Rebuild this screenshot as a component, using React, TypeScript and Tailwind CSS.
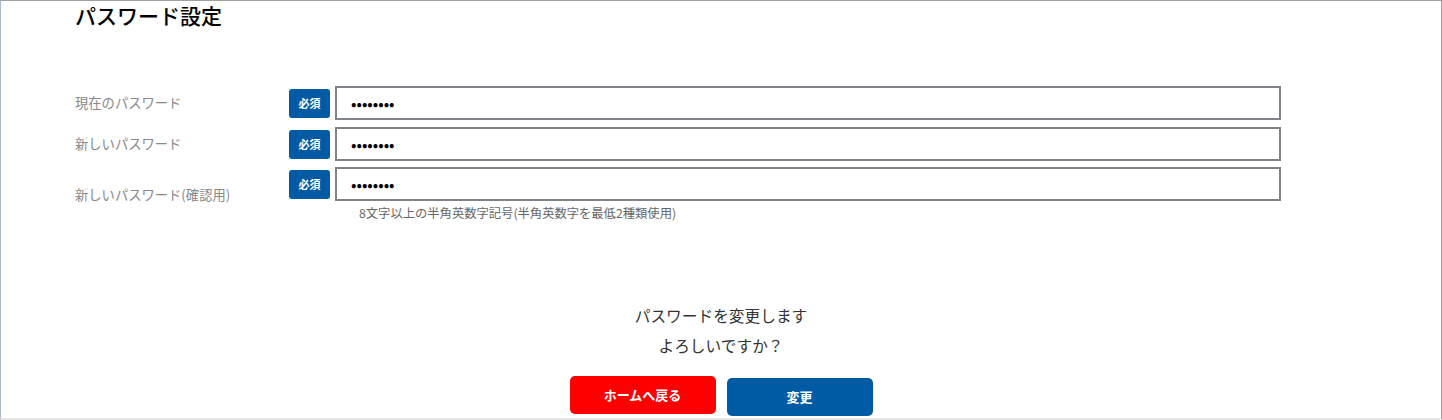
export default function App() {
  const font = { fontFamily: '"Noto Sans CJK JP", "Noto Sans", sans-serif' };

  const rows = [
    { label: "現在のパスワード", hint: false },
    { label: "新しいパスワード", hint: false },
    { label: "新しいパスワード(確認用)", hint: true },
  ];

  return (
    <div
      className="h-[420px] w-[1442px] overflow-hidden border-t border-l border-r border-b-2 border-t-[#a0a0a0] border-l-[#a9b8c6] border-r-[#a0a0a0] border-b-[#e6e6e6] bg-white"
      style={font}
    >
      <div className="pl-[74px]">
        <h1 className="text-[21px] font-medium leading-[28px] text-black">パスワード設定</h1>

        <div className="mt-[57px] flex flex-col">
          {rows.map((r, i) => (
            <div
              key={i}
              className={`flex items-center ${i === 1 ? "mt-[7px]" : ""} ${i === 2 ? "mt-[6px]" : ""}`}
            >
              <div className="w-[214px] text-[13.3px] text-[#888888]">{r.label}</div>
              <div className="flex flex-col">
                <div className="flex items-center gap-[5px]">
                  <span className="flex h-[29px] w-[41px] items-center justify-center rounded-[3px] bg-[#005ba4] text-[11px] font-bold text-white">
                    必須
                  </span>
                  <input
                    type="password"
                    readOnly
                    defaultValue="password"
                    className="h-[34px] w-[946px] border-2 border-[#808488] bg-white pl-[14px] text-[16px] text-black outline-none"
                  />
                </div>
                {r.hint && (
                  <p className="mt-[3px] pl-[70px] text-[12.3px] leading-[18px] text-[#666666]">
                    8文字以上の半角英数字記号(半角英数字を最低2種類使用)
                  </p>
                )}
              </div>
            </div>
          ))}
        </div>
      </div>

      <div className="mt-[79px] flex flex-col items-center text-[15.7px] leading-[30px] text-[#333333]">
        <p>パスワードを変更します</p>
        <p>よろしいですか？</p>
      </div>

      <div className="mt-[15px] flex items-start justify-center gap-[11px]">
        <button className="h-[38px] w-[146px] rounded-[5px] bg-[#ff0000] text-[13px] font-bold text-white">
          ホームへ戻る
        </button>
        <button className="mt-[2px] h-[38px] w-[146px] rounded-[5px] bg-[#005ba4] text-[13px] font-bold text-white">
          変更
        </button>
      </div>
    </div>
  );
}
